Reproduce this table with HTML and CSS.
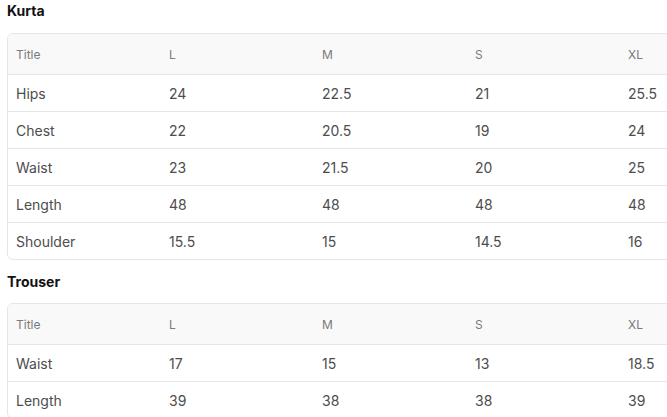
FILE: index.html
```html
<!DOCTYPE html>
<html>
<head>
<meta charset="utf-8">
<link rel="stylesheet" href="styles.css">
</head>
<body>
<section class="size-block">
  <h3 class="size-title">Kurta</h3>
  <div class="table-wrap">
    <table class="size-table">
      <thead>
        <tr><th>Title</th><th>L</th><th>M</th><th>S</th><th>XL</th></tr>
      </thead>
      <tbody>
        <tr><td>Hips</td><td>24</td><td>22.5</td><td>21</td><td>25.5</td></tr>
        <tr><td>Chest</td><td>22</td><td>20.5</td><td>19</td><td>24</td></tr>
        <tr><td>Waist</td><td>23</td><td>21.5</td><td>20</td><td>25</td></tr>
        <tr><td>Length</td><td>48</td><td>48</td><td>48</td><td>48</td></tr>
        <tr><td>Shoulder</td><td>15.5</td><td>15</td><td>14.5</td><td>16</td></tr>
      </tbody>
    </table>
  </div>
</section>
<section class="size-block">
  <h3 class="size-title">Trouser</h3>
  <div class="table-wrap">
    <table class="size-table">
      <thead>
        <tr><th>Title</th><th>L</th><th>M</th><th>S</th><th>XL</th></tr>
      </thead>
      <tbody>
        <tr><td>Waist</td><td>17</td><td>15</td><td>13</td><td>18.5</td></tr>
        <tr><td>Length</td><td>39</td><td>38</td><td>38</td><td>39</td></tr>
      </tbody>
    </table>
  </div>
</section>
</body>
</html>
```
FILE: styles.css
```css
html { overflow: hidden; }
body {
  margin: 0;
  padding: 0 0 0 7px;
  font-family: Inter, "Noto Sans", sans-serif;
  background: #fff;
  color: #4d4d4d;
}
.size-block { margin-bottom: 12px; }
.size-title {
  margin: 1px 0 12px;
  font-size: 14px;
  line-height: 20px;
  font-weight: 700;
  color: #111;
}
.size-block + .size-block .size-title { margin-bottom: 11px; }
.table-wrap {
  width: 765px;
  border: 1px solid #e6e6e6;
  border-radius: 6px;
  overflow: hidden;
}
.size-table {
  width: 100%;
  border-collapse: collapse;
  table-layout: fixed;
}
.size-table th:first-child,
.size-table td:first-child { width: 137px; }
.size-table th {
  height: 40px;
  padding: 0 8px;
  text-align: left;
  font-size: 12px;
  font-weight: 400;
  color: #7a7a7a;
  background: #f9f9f9;
  border-bottom: 1px solid #e6e6e6;
}
.size-table td {
  height: 36px;
  padding: 0 8px;
  font-size: 14px;
  color: #4d4d4d;
  border-bottom: 1px solid #e6e6e6;
}
.size-table tbody tr:last-child td { border-bottom: 0; }
```
